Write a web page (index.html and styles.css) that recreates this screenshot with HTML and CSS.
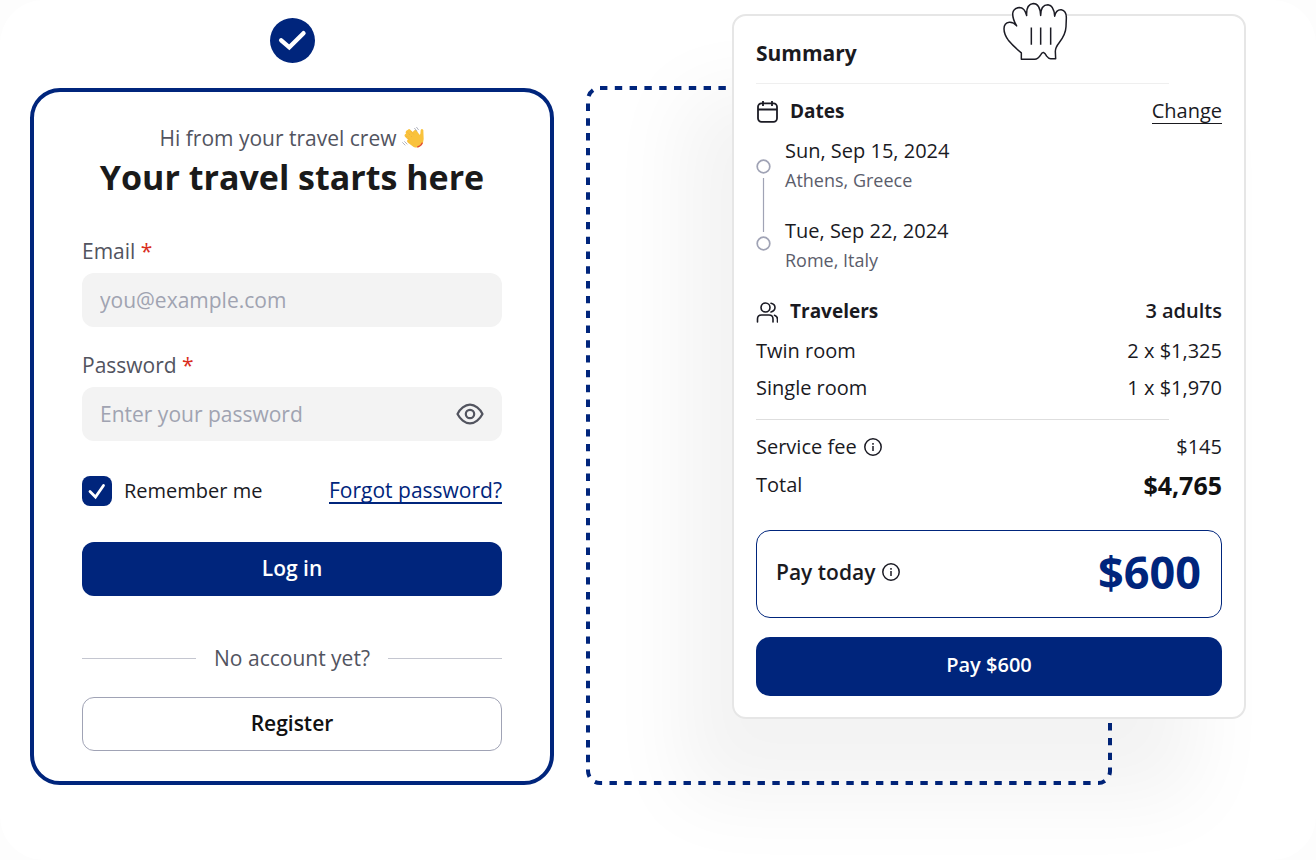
FILE: index.html
```html
<!DOCTYPE html>
<html lang="en">
<head>
<meta charset="utf-8">
<meta name="viewport" content="width=device-width, initial-scale=1">
<title>Travel login and summary</title>
<link rel="stylesheet" href="styles.css">
</head>
<body>
<main class="stage">
  <div class="badge-row">
    <svg class="badge" viewBox="0 0 45 45" role="img" aria-label="Done"><circle cx="22.5" cy="22.5" r="22.5" fill="#00257c"/><path d="M11.200 22.300 19.300 29.300 33.500 15.200" fill="none" stroke="#fff" stroke-width="4.400" stroke-linecap="round" stroke-linejoin="miter"/></svg>
  </div>

  <form class="login">
    <p class="greeting">Hi from your travel crew
      <svg class="wave" viewBox="0 0 66 66" role="img" aria-label="waving hand"><path d="M17 8q3-4 7 0l7 7 5-5q4-3 8 3l6 8q1 4 4 0l1-11q3-7 8-1l1 27q0 13-8 20-10 9-22 4L17 47q-6-6 0-9L8 29q-4-6 3-9-4-8 6-12z" fill="#f9c23c" transform="translate(1 0)"/><path d="M17 17 29 29M13 27 24 38M26 12l10 11" fill="none" stroke="#e39d44" stroke-width="2" stroke-dasharray="3 4"/><path d="M46 60q12-3 15-13" fill="none" stroke="#e0453a" stroke-width="4"/><path d="M37 3l8 10M43 0l7 9M1 46l9 9M7 43l9 9" fill="none" stroke="#8b8fa0" stroke-width="2"/></svg>
    </p>
    <h1 class="title">Your travel starts here</h1>

    <div class="fields">
      <div class="field">
        <label for="email">Email <span class="required">*</span></label>
        <div class="control"><input id="email" type="email" placeholder="you@example.com"></div>
      </div>
      <div class="field">
        <label for="password">Password <span class="required">*</span></label>
        <div class="control">
          <input id="password" type="password" placeholder="Enter your password">
          <button class="reveal" type="button" aria-label="Show password"><svg class="eye" viewBox="0 0 28 22" fill="none" stroke="#52545f" stroke-width="2.200"><path d="M1.500 11C4 6 9 1.700 14 1.700S24 6 26.500 11C24 16 19 20.300 14 20.300S4 16 1.500 11z" stroke-linejoin="round"/><circle cx="14" cy="11" r="4.200"/></svg></button>
        </div>
      </div>
    </div>

    <div class="options">
      <label class="remember"><input class="tick" type="checkbox" checked><svg class="tick-mark" viewBox="0 0 30 30"><path d="M8 15.500 13.500 21 21.500 9.500" fill="none" stroke="#fff" stroke-width="2.800" stroke-linecap="round"/></svg><span>Remember me</span></label>
      <a class="forgot" href="#">Forgot password?</a>
    </div>

    <button class="button" type="submit">Log in</button>
    <p class="divider"><span>No account yet?</span></p>
    <button class="button button-outline" type="button">Register</button>
  </form>

  <div class="slot">
    <svg class="outline" aria-hidden="true"><rect class="outline-rect" x="2" y="2" rx="12" pathLength="326"/></svg>
    <section class="summary">
      <svg class="grab" viewBox="36 6 198 176" fill="#fff" stroke="#1b1b24" stroke-width="4.500" stroke-linejoin="round" aria-hidden="true"><path d="M94 177V158Q70 138 55 120 42 103 42 86 42 68 58 66 70 65 80 77 68 58 68 40 70 24 88 22 104 22 110 46 108 12 130 10 150 10 152 46 152 14 174 14 192 16 194 48 198 28 214 29 230 32 229 55L228 80Q227 103 208 127 196 142 196 154L197 176H182Q176 176 170 168 160 148 152 164 144 177 134 177Z"/><path d="M124 82v52M152 82v52M182 82v52"/></svg>
      <h2 class="summary-title">Summary</h2>
      <hr class="rule rule-light">
      <div class="row">
        <h3 class="section-title"><svg class="icon" viewBox="0 0 22 24" fill="none" stroke="#1b1b24" stroke-width="1.800"><rect x="2" y="4.300" width="19" height="18.500" rx="3.500"/><path d="M2 10.500h19M7 2v5M16 2v5" /></svg>Dates</h3>
        <a class="change" href="#">Change</a>
      </div>
      <div class="trip">
        <svg class="track" viewBox="0 0 15 92" fill="none" stroke="#a0a3b5"><circle cx="7.500" cy="7.500" r="6.300" stroke-width="1.700"/><path d="M7.500 19v54" stroke-width="1.200"/><circle cx="7.500" cy="84.500" r="6.300" stroke-width="1.700"/></svg>
        <ol class="stops">
          <li><p class="date">Sun, Sep 15, 2024</p><p class="place">Athens, Greece</p></li>
          <li><p class="date">Tue, Sep 22, 2024</p><p class="place">Rome, Italy</p></li>
        </ol>
      </div>
      <div class="row">
        <h3 class="section-title"><svg class="icon" viewBox="0 0 22 24" fill="none" stroke="#1b1b24" stroke-width="1.600" stroke-linecap="round"><circle cx="9.500" cy="8.500" r="4.500"/><path d="M1.500 23v-3q0-4 4-4h7.500q4 0 4 4v3M15 4.200q4 1 4 4.400t-4 4.400M18.500 16.200q3 1 3 4V23"/></svg>Travelers</h3>
        <strong class="people">3 adults</strong>
      </div>
      <div class="rooms">
        <div class="row"><span>Twin room</span><span>2 x $1,325</span></div>
        <div class="row"><span>Single room</span><span>1 x $1,970</span></div>
      </div>
      <hr class="rule">
      <div class="row"><span class="with-info">Service fee <svg class="info" viewBox="0 0 18 18" fill="none" stroke="#1b1b24" stroke-width="1.500"><circle cx="9" cy="9" r="8.200"/><path d="M9 8v5M9 5v1.700"/></svg></span><span>$145</span></div>
      <div class="row total"><span>Total</span><strong class="amount">$4,765</strong></div>
      <div class="today">
        <span class="with-info today-label">Pay today <svg class="info" viewBox="0 0 18 18" fill="none" stroke="#1b1b24" stroke-width="1.500"><circle cx="9" cy="9" r="8.200"/><path d="M9 8v5M9 5v1.700"/></svg></span>
        <strong class="today-amount">$600</strong>
      </div>
      <button class="button button-pay" type="button">Pay $600</button>
    </section>
  </div>
</main>
</body>
</html>
```
FILE: styles.css
```css
* { box-sizing: border-box; }
body {
  margin: 0;
  background: #fdfdfd;
  color: #1a1a1f;
  font-family: "Open Sans", "Noto Sans", sans-serif;
  font-size: 20px;
  line-height: 28px;
}
h1, h2, h3, p, ol { margin: 0; padding: 0; }
ol { list-style: none; }
svg { display: block; flex: none; }
button, input { font: inherit; }

.stage {
  min-height: 100vh;
  padding: 18px 204px 74px 30px;
  border-radius: 44px;
  background: #fff;
  overflow: hidden;
  display: grid;
  grid-template-columns: 524fr 526fr;
  column-gap: 32px;
  row-gap: 25px;
  align-content: start;
}
.badge-row { grid-column: 1; display: flex; justify-content: center; }
.badge { width: 45px; height: 45px; }

.login {
  grid-column: 1;
  padding: 33px 48px 30px;
  border: 4px solid #00257c;
  border-radius: 30px;
  background: #fff;
  font-size: 21px;
}
.greeting {
  display: flex;
  justify-content: center;
  align-items: center;
  gap: 6px;
  line-height: 26px;
  color: #52545f;
}
.wave { width: 22px; height: 22px; }
.title {
  margin-top: 4px;
  text-align: center;
  font-size: 34px;
  line-height: 44px;
  font-weight: 700;
  color: #1a1a1a;
}
.fields { margin-top: 38px; display: grid; gap: 24px; }
.field { display: grid; gap: 8px; color: #52545f; }
.required { color: #d92d20; }
.control {
  display: flex;
  align-items: center;
  height: 54px;
  padding: 0 18px;
  border-radius: 12px;
  background: #f3f3f3;
}
.control input {
  flex: 1;
  min-width: 0;
  padding: 0;
  border: 0;
  outline: 0;
  background: transparent;
  color: #1a1a1f;
}
.control input::placeholder { color: #a0a3b1; opacity: 1; }
.reveal { padding: 0; border: 0; background: none; cursor: pointer; }
.eye { width: 28px; height: 22px; }
.options {
  margin: 35px 0 36px;
  display: flex;
  justify-content: space-between;
  align-items: center;
}
.remember {
  display: grid;
  grid-template-columns: 30px auto;
  column-gap: 12px;
  align-items: center;
  font-size: 20px;
}
.tick {
  grid-area: 1 / 1;
  appearance: none;
  width: 30px;
  height: 30px;
  margin: 0;
  border-radius: 8px;
  background: #00257c;
}
.tick-mark { grid-area: 1 / 1; width: 30px; height: 30px; pointer-events: none; }
.forgot, .change { text-decoration: none; line-height: 24px; }
.forgot { color: #00257c; border-bottom: 2px solid #00257c; font-weight: 500; }
.button {
  display: block;
  width: 100%;
  height: 54px;
  padding: 0 0 2px;
  border: 0;
  border-radius: 12px;
  background: #00257c;
  color: #fff;
  font-weight: 600;
  cursor: pointer;
}
.button-outline { border: 1px solid #a0a3b5; background: #fff; color: #111; }
.divider { margin: 48px 0 25px; display: flex; align-items: center; gap: 18px; color: #52545f; }
.divider::before, .divider::after { content: ""; flex: 1; height: 1px; background: #c4c6d0; }

.slot { grid-column: 2; margin-top: -2px; position: relative; }
.outline { width: 100%; height: 100%; }
.outline-rect {
  width: calc(100% - 4px);
  height: calc(100% - 4px);
  fill: none;
  stroke: #00257c;
  stroke-width: 4px;
  stroke-dasharray: 1 1;
}
.summary {
  position: absolute;
  top: -72px;
  left: 146px;
  right: -134px;
  padding: 23px 22px 21px;
  border: 2px solid #e6e6e6;
  border-radius: 14px;
  background: #fff;
  box-shadow: -50px 80px 80px rgba(0, 0, 0, 0.05);
  font-weight: 500;
}
.grab { position: absolute; top: -14px; left: 268px; width: 66px; height: 59px; }
.summary-title { font-size: 21px; line-height: 28px; font-weight: 700; }
.rule { height: 1px; margin: 17px 53px 13px 0; border: 0; background: #dedede; }
.rule-light { margin-top: 16px; background: #efefef; }
.row { display: flex; justify-content: space-between; align-items: center; }
.section-title { display: flex; align-items: center; gap: 12px; font-size: 19px; font-weight: 700; }
.icon { width: 22px; height: 24px; }
.change { color: inherit; border-bottom: 1px solid #1a1a1f; }
.trip { margin: 12px 0 22px; display: flex; gap: 14px; align-items: flex-start; }
.track { width: 15px; height: 92px; margin-top: 22px; }
.stops { display: grid; gap: 22px; }
.place { font-size: 18px; line-height: 30px; color: #5b5d6b; }
.people { font-weight: 600; }
.rooms { margin-top: 12px; display: grid; gap: 9px; }
.with-info { display: flex; align-items: center; gap: 7px; }
.info { width: 18px; height: 18px; }
.total { margin-top: 9px; }
.amount { font-size: 25px; line-height: 30px; font-weight: 700; color: #111; }
.today {
  margin: 30px 0 19px;
  height: 88px;
  padding: 0 20px 4px 19px;
  display: flex;
  justify-content: space-between;
  align-items: center;
  border: 1px solid #00257c;
  border-radius: 14px;
}
.today-label { font-size: 21px; font-weight: 600; }
.today-amount { font-size: 45px; line-height: 56px; font-weight: 700; color: #00257c; }
.button-pay { height: 59px; padding-bottom: 4px; border-radius: 14px; }

@media (max-width: 1000px) {
  .stage { grid-template-columns: 1fr; padding-right: 30px; }
  .slot { grid-column: 1; }
  .outline { display: none; }
  .summary { position: relative; inset: auto; }
}
```
